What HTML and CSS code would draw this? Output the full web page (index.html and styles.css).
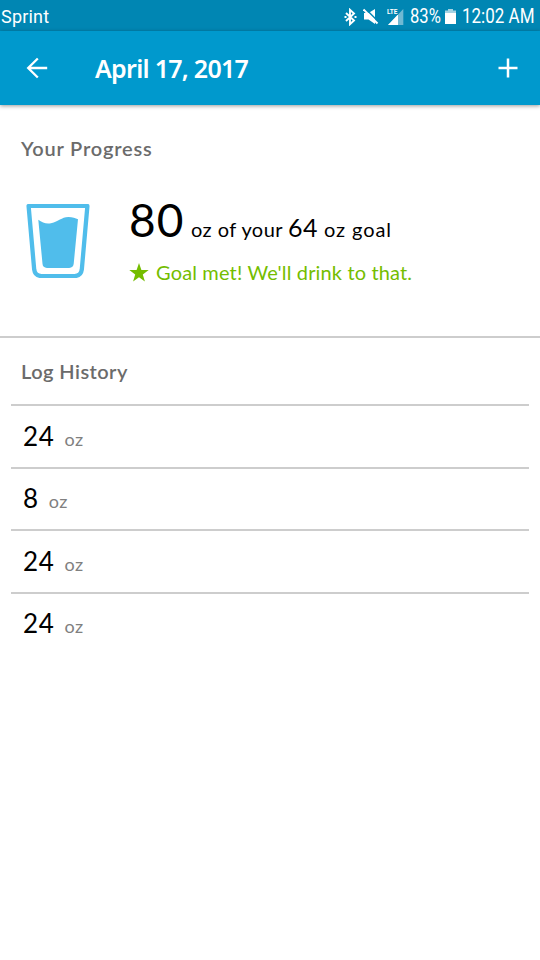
FILE: index.html
```html
<!DOCTYPE html>
<html lang="en">
<head>
<meta charset="utf-8">
<title>Water Log</title>
<link rel="stylesheet" href="styles.css">
</head>
<body>
<div class="status">
  <span class="carrier">Sprint</span>
  <svg class="bluetooth" width="13" height="18" viewBox="0 0 13 18" fill="none" stroke="#fff" stroke-width="1.900"><path d="M2 5l8 7.500-4 3.700V1.800l4 3.700L2 13"/><path d="M.5 9h2M10.500 9h2"/></svg>
  <svg class="mute" width="16" height="17" viewBox="0 0 16 17"><path d="M1 5h4.500L12 1v15l-6.500-4.500H1z" fill="#fff"/><path d="M2 .3L16 14.300" stroke="#0086b3" stroke-width="1.500"/><path d="M.5 1.500L14.500 15.500" stroke="#fff" stroke-width="1.900"/></svg>
  <svg class="signal" width="17" height="18" viewBox="0 0 17 18"><path d="M16.300 1v16H1z" fill="#70b9d3"/><path d="M11 6.500V17H1z" fill="#fff"/><path d="M0 0h11v7H0z" fill="#0086b3"/><text x="0" y="6" class="lte">LTE</text></svg>
  <span class="percent">83%</span>
  <svg class="battery" width="11" height="17" viewBox="0 0 11 17"><path d="M3 1h5v1.500h3V16H0V2.500h3z" fill="#a5d3e3"/><path d="M0 5h11v11H0z" fill="#fff"/></svg>
  <span class="clock">12:02 AM</span>
</div>
<header class="bar">
  <svg class="back" width="22" height="22" viewBox="0 0 22 22" fill="none" stroke="#fff" stroke-width="2.300"><path d="M21.200 11H2.500M11.800 1.500L2.200 11l9.600 9.500"/></svg>
  <h1 class="title">April 17, 2017</h1>
  <svg class="add" width="20" height="20" viewBox="0 0 20 20" stroke="#fff" stroke-width="2.500"><path d="M10 .5v19M.5 10h19"/></svg>
</header>
<main>
  <section class="progress">
    <h2 class="heading wide">Your Progress</h2>
    <div class="summary">
      <svg class="glass" width="64" height="74" viewBox="0 0 64 75" preserveAspectRatio="none"><path d="M2.600 2h58.800l-5.600 64.500Q55 73 48.500 73h-33Q9 73 8.200 66.500z" fill="none" stroke="#50bdeb" stroke-width="4.300" stroke-linejoin="round"/><path d="M12.300 16c4 3 8 4.300 12.700 3.400 8-1.500 10-6 17.500-6.200 4 0 7 1.200 9.500 2.300l-4.300 45q-.4 4-4.500 4.300H21q-4.300-.3-4.500-4.300z" fill="#50bdeb"/></svg>
      <div class="figures">
        <p class="amount"><span class="total">80</span><span class="ofyour">oz of your</span><span class="goal">64</span><span class="unit">oz goal</span></p>
        <p class="met"><svg width="20" height="19" viewBox="0 0 20 19"><path d="M10 0l2.400 6.900 7.300.1-5.900 4.500 2.100 7L10 14.300 4.100 18.500l2.100-7L.3 7l7.300-.1z" fill="#74bd00"/></svg><span>Goal met! We'll drink to that.</span></p>
      </div>
    </div>
  </section>
  <section class="history">
    <h2 class="heading">Log History</h2>
    <ul class="entries">
      <li><b>24</b><span>oz</span></li>
      <li><b>8</b><span>oz</span></li>
      <li><b>24</b><span>oz</span></li>
      <li><b>24</b><span>oz</span></li>
    </ul>
  </section>
</main>
</body>
</html>
```
FILE: styles.css
```css
* { box-sizing: border-box; margin: 0; padding: 0; }
body { height: 960px; background: #fff; color: #000; font-family: Lato, "Noto Sans", sans-serif; overflow: hidden; }
svg { display: block; flex: none; }
.status { display: flex; align-items: center; height: 31px; padding: 2px 6px 0 1px; background: #0086b3; color: #fff; font: 18px/29px Roboto, sans-serif; white-space: nowrap; }
.carrier { width: 343px; letter-spacing: .2px; }
.mute { margin-left: 6px; }
.signal { margin-left: 8px; }
.lte { font: bold 6.500px Roboto, sans-serif; fill: #fff; }
.percent { width: 31px; margin-left: 6px; font-size: 20px; transform: scaleX(.83); transform-origin: left; }
.battery { margin-left: 4px; }
.clock { width: 72px; margin-left: 6px; font-size: 20px; transform: scaleX(.85); transform-origin: left; }
.bar { display: flex; align-items: center; height: 74px; padding: 0 22px 0 26px; background: #0099cd; box-shadow: 0 1px 4px rgba(0,0,0,.4); color: #fff; }
.title { flex: 1; margin: -1px 0 0 47px; font: 600 25px/34px "Noto Sans", sans-serif; letter-spacing: -.72px; }
.progress { height: 232.500px; padding-top: 30px; border-bottom: 2px solid #cdcdcd; }
.heading { padding-left: 21px; color: #6b6b6b; font: 600 20px/26px Lato, sans-serif; letter-spacing: .45px; }
.heading.wide { letter-spacing: .8px; }
.summary { display: flex; padding: 43px 0 0 26px; }
.figures { margin-left: 39px; }
.amount { display: flex; align-items: baseline; height: 50px; margin-top: -10px; line-height: 52px; white-space: nowrap; }
.total { width: 62px; font-size: 46px; letter-spacing: 1px; }
.ofyour { width: 97px; font-size: 20px; letter-spacing: .45px; }
.goal { width: 36px; font-size: 25px; letter-spacing: .6px; }
.unit { font-size: 20px; letter-spacing: .9px; }
.met { display: flex; align-items: center; gap: 7px; margin-top: 15px; color: #74bd00; font-size: 20px; line-height: 26px; letter-spacing: .15px; white-space: nowrap; }
.history { padding-top: 20px; }
.entries { margin: 20.500px 11px 0; list-style: none; }
.entries li { display: flex; align-items: baseline; height: 62.500px; padding: 11.500px 0 0 12px; border-top: 2px solid #cdcdcd; line-height: 36px; }
.entries b { margin-right: 10px; font-size: 26px; font-weight: 400; letter-spacing: .7px; }
.entries span { color: #808080; font-size: 18px; letter-spacing: .5px; }
```
